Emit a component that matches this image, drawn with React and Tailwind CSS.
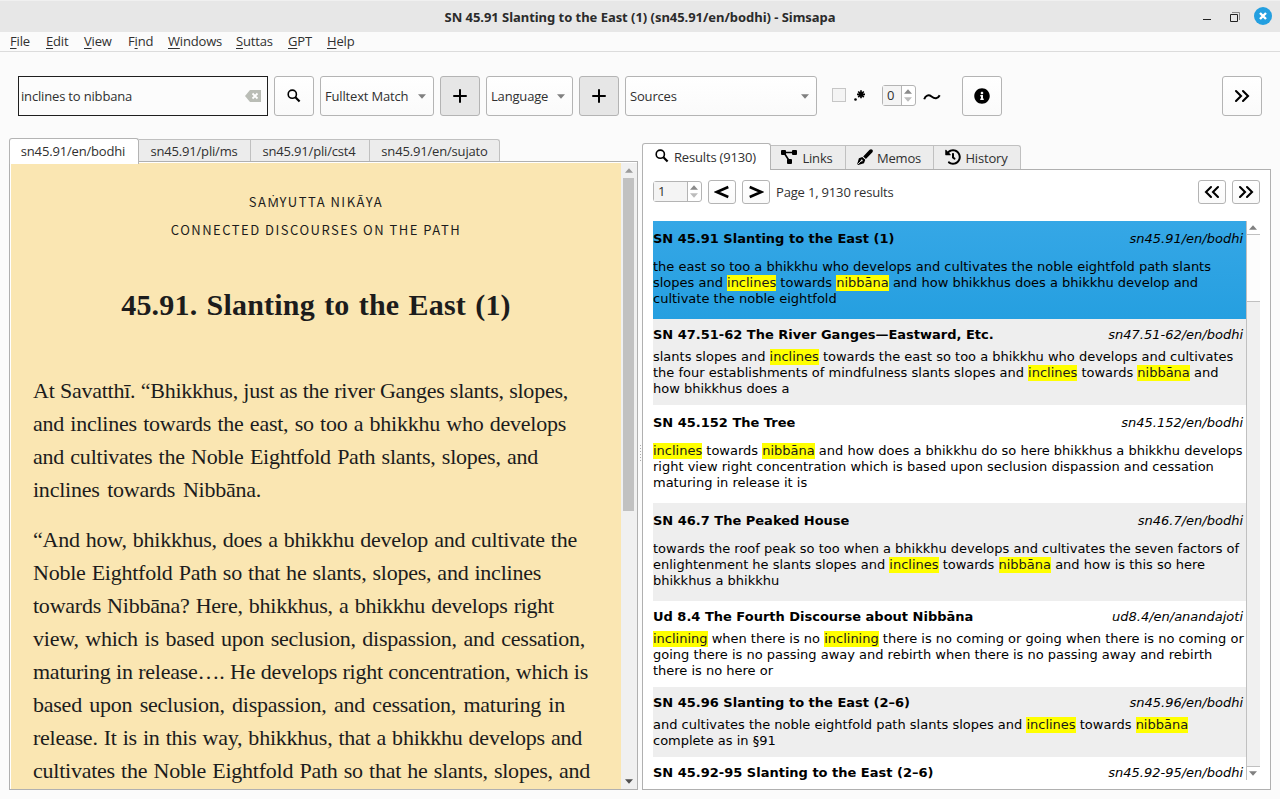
import React from "react";
import { FaHistory, FaInfoCircle } from "react-icons/fa";

const results = [
  { title: "SN 45.91 Slanting to the East (1)", uid: "sn45.91/en/bodhi", roomy: true, height: "h-[98px]", selected: true,
    lines: ["the east so too a bhikkhu who develops and cultivates the noble eightfold path slants", "slopes and [inclines] towards [nibbāna] and how bhikkhus does a bhikkhu develop and", "cultivate the noble eightfold"] },
  { title: "SN 47.51-62 The River Ganges—Eastward, Etc.", uid: "sn47.51-62/en/bodhi", height: "h-[86px]", shaded: true,
    lines: ["slants slopes and [inclines] towards the east so too a bhikkhu who develops and cultivates", "the four establishments of mindfulness slants slopes and [inclines] towards [nibbāna] and", "how bhikkhus does a"] },
  { title: "SN 45.152 The Tree", uid: "sn45.152/en/bodhi", roomy: true, height: "h-[98px]",
    lines: ["[inclines] towards [nibbāna] and how does a bhikkhu do so here bhikkhus a bhikkhu develops", "right view right concentration which is based upon seclusion dispassion and cessation", "maturing in release it is"] },
  { title: "SN 46.7 The Peaked House", uid: "sn46.7/en/bodhi", roomy: true, height: "h-[98px]", shaded: true,
    lines: ["towards the roof peak so too when a bhikkhu develops and cultivates the seven factors of", "enlightenment he slants slopes and [inclines] towards [nibbāna] and how is this so here", "bhikkhus a bhikkhu"] },
  { title: "Ud 8.4 The Fourth Discourse about Nibbāna", uid: "ud8.4/en/anandajoti", height: "h-[86px]",
    lines: ["[inclining] when there is no [inclining] there is no coming or going when there is no coming or", "going there is no passing away and rebirth when there is no passing away and rebirth", "there is no here or"] },
  { title: "SN 45.96 Slanting to the East (2–6)", uid: "sn45.96/en/bodhi", height: "h-[70px]", shaded: true,
    lines: ["and cultivates the noble eightfold path slants slopes and [inclines] towards [nibbāna]", "complete as in §91"] },
  { title: "SN 45.92-95 Slanting to the East (2–6)", uid: "sn45.92-95/en/bodhi", height: "h-[86px]", lines: [] },
];

const paragraphs = [
  [
    ["w-[535px]", "At Savatthī. “Bhikkhus, just as the river Ganges slants, slopes,"],
    ["w-[533px]", "and inclines towards the east, so too a bhikkhu who develops"],
    ["w-[505px]", "and cultivates the Noble Eightfold Path slants, slopes, and"],
    ["w-[228px]", "inclines towards Nibbāna."],
  ],
  [
    ["w-[544px]", "“And how, bhikkhus, does a bhikkhu develop and cultivate the"],
    ["w-[508px]", "Noble Eightfold Path so that he slants, slopes, and inclines"],
    ["w-[521px]", "towards Nibbāna? Here, bhikkhus, a bhikkhu develops right"],
    ["w-[552px]", "view, which is based upon seclusion, dispassion, and cessation,"],
    ["w-[555px]", "maturing in release…. He develops right concentration, which is"],
    ["w-[532px]", "based upon seclusion, dispassion, and cessation, maturing in"],
    ["w-[549px]", "release. It is in this way, bhikkhus, that a bhikkhu develops and"],
    ["w-[557px]", "cultivates the Noble Eightfold Path so that he slants, slopes, and"],
  ],
];

const menus = [
  ["", "F", "ile", "w-[36px]"], ["", "E", "dit", "w-[38px]"], ["", "V", "iew", "w-[44px]"], ["F", "i", "nd", "w-[40px]"],
  ["", "W", "indows", "w-[68px]"], ["", "S", "uttas", "w-[52px]"], ["", "G", "PT", "w-[39px]"], ["", "H", "elp", "w-[40px]"],
];

const button = "flex shrink-0 items-center justify-center rounded-[3px] border border-[#b4b4b4] bg-linear-to-b from-white to-[#fafafa]";

function Triangle({ up, className = "text-[#8a8a8a]" }) {
  return (
    <svg width="8" height="5" viewBox="0 0 8 5" className={className} fill="currentColor">
      <path d={up ? "M4 0.3 8 4.7H0z" : "M0 0.3H8L4 4.7z"} />
    </svg>
  );
}

function SearchIcon({ className = "" }) {
  return (
    <svg width="14" height="14" viewBox="0 0 14 14" fill="none" stroke="#000" className={className}>
      <circle cx="5.3" cy="5.2" r="4.1" strokeWidth="1.6" />
      <path d="M8.4 8.3 12.6 12.5" strokeWidth="2.2" />
    </svg>
  );
}

function PlusIcon() {
  return (
    <svg width="14" height="14" viewBox="0 0 14 14" fill="none" stroke="#000" strokeWidth="2" strokeLinecap="round">
      <path d="M7 1v12M1 7h12" />
    </svg>
  );
}

function ChevronsIcon({ left }) {
  return (
    <svg width="16" height="14" viewBox="0 0 16 14" fill="none" stroke="#000" strokeWidth="2.1" strokeLinecap="round">
      <path d={left ? "M7 2 2 7l5 5M14 2 9 7l5 5" : "M2 2l5 5-5 5M9 2l5 5-5 5"} />
    </svg>
  );
}

function AngleIcon({ left }) {
  return (
    <svg width="16" height="14" viewBox="0 0 16 14" fill="none" stroke="#000" strokeWidth="2.5">
      <path d={left ? "M14.3 2 2.8 7l11.5 5" : "M1.7 2l11.5 5-11.5 5"} />
    </svg>
  );
}

function LinksIcon() {
  return (
    <svg width="16" height="14" viewBox="0 0 16 14" fill="#000" className="mb-[2px]">
      <rect x="0" y="0" width="5" height="5" rx="1" />
      <rect x="11" y="0" width="5" height="5" rx="1" />
      <rect x="6" y="9" width="5" height="5" rx="1" />
      <path d="M4 2.5h8M3.5 3.5 8 10.5" stroke="#000" strokeWidth="1.6" />
    </svg>
  );
}

function BrushIcon() {
  return (
    <svg width="16" height="16" viewBox="0 0 16 16" className="mb-[2px]">
      <path d="M6.2 7.4 12.6.8c.8-.8 2-.8 2.7-.1.8.8.7 1.9-.1 2.8L8.9 10.1z" />
      <path d="M5.4 8 8.3 10.8 7 14.2 1.2 16 .2 15.1 1.9 9.2z" />
      <path d="M.9 15.2 4.3 11.7" stroke="#ececec" strokeWidth=".9" />
      <circle cx="4.7" cy="11.4" r="1" fill="#ececec" />
      <path d="M5.2 7.3 9.1 11" stroke="#ececec" strokeWidth=".7" />
    </svg>
  );
}

function Spinner({ value, compact }) {
  return (
    <div className={`flex h-[21px] shrink-0 rounded-[3px] border border-[#b4b4b4] bg-white ${compact ? "w-[34px]" : "w-[49px]"}`}>
      <div className="flex flex-1 items-center bg-[#f4f4f4] pl-1 leading-none">{value}</div>
      <div className="flex w-[14px] flex-col items-center justify-center gap-[3px] border-l border-[#b4b4b4] pr-px">
        <Triangle up />
        <Triangle className="text-[#bcbcbc]" />
      </div>
    </div>
  );
}

function Select({ label, className }) {
  return (
    <div className={`flex h-10 shrink-0 items-center justify-between rounded-[3px] border border-[#b4b4b4] bg-linear-to-b from-white to-[#fafafa] pl-[4px] pr-[7px] ${className}`}>
      <span>{label}</span>
      <Triangle className="text-[#808080]" />
    </div>
  );
}

function Snippet({ text }) {
  return text.split(/(\[[^\]]+\])/).map((part, i) =>
    part.startsWith("[") ? <span key={i} className="inline-block h-4 bg-[#ffff00] text-[#1a1a1a]">{part.slice(1, -1)}</span> : part
  );
}

function Result({ item }) {
  const background = item.selected ? "bg-linear-to-b from-[#35a7e6] to-[#259fe0]" : item.shaded ? "bg-[#eeeeee]" : "bg-white";
  return (
    <div className={`shrink-0 text-black ${item.height} ${background} ${item.roomy ? "pt-[10px]" : "pt-[8px]"}`}>
      <div className="flex justify-between pr-[3px]">
        <b>{item.title}</b>
        <i>{item.uid}</i>
      </div>
      <div className={item.roomy ? "mt-3" : "mt-1.5"}>
        {item.lines.map((line) => (
          <div key={line} className="h-4 whitespace-nowrap"><Snippet text={line} /></div>
        ))}
      </div>
    </div>
  );
}

function TitleBar() {
  return (
    <header className="grid h-8 shrink-0 grid-cols-[1fr_auto_1fr] items-center border-t border-[#f0f0f0] bg-[#e7e7e7]">
      <span />
      <h1 className="font-['Noto_Sans',sans-serif] text-[13px] font-bold tracking-[-0.04px] text-[#2b2b2b]">
        SN 45.91 Slanting to the East (1) (sn45.91/en/bodhi) - Simsapa
      </h1>
      <div className="flex items-center justify-end pr-2">
        <svg width="8" height="10" viewBox="0 0 8 10" className="mr-[19px]"><path d="M0 7h8v1H0z" fill="#222" /></svg>
        <svg width="10" height="10" viewBox="0 0 10 10" className="mr-[14px]" fill="none">
          <path d="M.5 2.5h7v7h-7z" stroke="#222" />
          <path d="M2 .5h7.5V8" stroke="#888" />
        </svg>
        <svg width="18" height="18" viewBox="0 0 18 18" className="-mt-px">
          <circle cx="9" cy="9" r="9" fill="#239fe0" />
          <path d="M6 6l6 6M12 6l-6 6" stroke="#fff" strokeWidth="2.4" />
        </svg>
      </div>
    </header>
  );
}

function Toolbar() {
  return (
    <div className="mt-6 flex h-10 shrink-0 items-center pl-[18px] pr-[18px]">
      <div className="flex h-10 w-[250px] shrink-0 items-center justify-between border border-[#1f1f1f] bg-[#fcfcfc] pl-[2px] pr-[6px]">
        <span>inclines to nibbana</span>
        <svg width="16" height="12" viewBox="0 0 16 12">
          <path d="M0 6 5 0h11v12H5z" fill="#babdb6" />
          <path d="M7.5 3.5l5 5M12.5 3.5l-5 5" stroke="#fff" strokeWidth="1.8" />
        </svg>
      </div>
      <div className={`${button} ml-1.5 h-10 w-10`}><SearchIcon /></div>
      <Select label="Fulltext Match" className="ml-1.5 w-[114px]" />
      <div className="ml-1.5 flex h-10 w-10 shrink-0 items-center justify-center rounded-[3px] border border-[#b4b4b4] bg-[#e6e6e6]"><PlusIcon /></div>
      <Select label="Language" className="ml-1.5 w-[87px]" />
      <div className="ml-1.5 flex h-10 w-10 shrink-0 items-center justify-center rounded-[3px] border border-[#b4b4b4] bg-[#e6e6e6]"><PlusIcon /></div>
      <Select label="Sources" className="ml-1.5 w-48" />
      <div className="mb-[2px] ml-[15px] size-[14px] shrink-0 border border-[#c6c6c6] bg-[#f4f4f4]" />
      <svg width="12" height="12" viewBox="0 0 12 12" className="ml-2 shrink-0">
        <circle cx="1.5" cy="9.500" r="1.3" />
        <path d="M7 .3v8M3 4.3h8M4.2 1.500l5.6 5.6M9.8 1.500 4.2 7.1" stroke="#000" strokeWidth="1.7" />
      </svg>
      <div className="mb-px ml-4"><Spinner value="0" compact /></div>
      <svg width="18" height="8" viewBox="0 0 18 8" className="ml-[7px] mt-px shrink-0" fill="none" stroke="#000" strokeWidth="2">
        <path d="M1.2 6.3C2.5 2.4 5.5 1.200 8.5 3.500c3.200 2.400 6.300 2.600 8.200-1.200" />
      </svg>
      <div className={`${button} ml-[21px] h-10 w-10`}><FaInfoCircle size={16} color="#000" /></div>
      <div className={`${button} ml-auto h-10 w-10`}><ChevronsIcon /></div>
    </div>
  );
}

const idleTab = "flex shrink-0 items-center justify-center border-r border-t border-[#c0c0c0] bg-[#ececec]";

function ReaderPane() {
  return (
    <section className="mt-[21px] flex w-[629px] shrink-0 flex-col">
      <div className="flex h-6 shrink-0 items-end">
        <div className="z-10 flex h-[26px] w-[130px] shrink-0 translate-y-[1px] items-center justify-center self-start rounded-t-[3px] border border-b-0 border-[#b4b4b4] bg-white pb-[2px] pr-[2px]">sn45.91/en/bodhi</div>
        <div className={`${idleTab} h-[22px] w-[112px] pr-[1px]`}>sn45.91/pli/ms</div>
        <div className={`${idleTab} h-[22px] w-[119px] pr-[2px]`}>sn45.91/pli/cst4</div>
        <div className={`${idleTab} h-[22px] w-[130px] rounded-tr-[3px]`}>sn45.91/en/sujato</div>
      </div>
      <div className="flex min-h-0 flex-1 border border-[#b0b0b0] bg-white pl-px pt-px">
        <article className="h-full w-[610px] shrink-0 overflow-hidden bg-[#fae6b2] pl-[22px] text-[#1c1c1c]">
          <div className="-ml-[22px] pt-[25px] text-center font-['Noto_Sans_CJK_SC','Noto_Sans',sans-serif] text-[13px] leading-7 tracking-[1.5px]">
            <p className="h-7">SA<span className="font-['Noto_Sans',sans-serif] text-[12.5px] tracking-[0.8px]">Ṁ</span>YUTTA NIKĀYA</p>
            <p>CONNECTED DISCOURSES ON THE PATH</p>
          </div>
          <h2 className="-ml-[22px] mt-[41px] text-center font-['Liberation_Serif',serif] text-[30px] font-bold leading-[40px] tracking-[0.2px] [word-spacing:1.500px]">45.91. Slanting to the East (1)</h2>
          <div className="mt-[49px] flex flex-col gap-[17px] font-['Liberation_Serif',serif] text-[22px] leading-[33px] tracking-[-0.24px]">
            {paragraphs.map((lines, i) => (
              <p key={i}>
                {lines.map(([width, text]) => (
                  <span key={text} className={`block h-[33px] [text-align-last:justify] ${width}`}>{text}</span>
                ))}
              </p>
            ))}
          </div>
        </article>
        <div className="flex flex-1 flex-col items-center bg-[#f0f0f0] pr-px pt-[5px]">
          <Triangle up className="text-[#9a9a9a]" />
          <div className="mt-[5px] h-[333px] w-[11px] bg-[#c1c1c1]" />
          <Triangle className="mb-[5px] mt-auto text-[#505050]" />
        </div>
      </div>
    </section>
  );
}

function ResultsPane() {
  return (
    <section className="mt-[27px] flex w-[629px] shrink-0 flex-col">
      <div className="flex h-[26px] shrink-0 items-end">
        <div className="z-10 flex h-[27px] w-[129px] shrink-0 translate-y-[1px] items-center justify-center rounded-t-[3px] border border-b-0 border-[#b4b4b4] bg-white pr-[2px]">
          <SearchIcon className="mb-[3px] mr-[5px]" />Results (9130)
        </div>
        <div className={`${idleTab} h-6 w-[75px] gap-[5px] pr-[2px]`}><LinksIcon />Links</div>
        <div className={`${idleTab} h-6 w-[88px] gap-[4px] pr-[1px]`}><BrushIcon />Memos</div>
        <div className={`${idleTab} h-6 w-[87px] gap-[4px] rounded-tr-[3px] pr-[1px]`}><FaHistory size={16} color="#000" className="mb-[2px]" />History</div>
      </div>
      <div className="flex min-h-0 flex-1 flex-col border border-[#b0b0b0] bg-white pb-[9px] pl-[10px] pr-[10px] pt-[10px]">
        <div className="flex h-6 shrink-0 items-center">
          <div className="mb-px"><Spinner value="1" /></div>
          <div className={`${button} ml-1.5 h-6 w-7`}><AngleIcon left /></div>
          <div className={`${button} ml-1.5 h-6 w-7`}><AngleIcon /></div>
          <span className="ml-1.5">Page 1, 9130 results</span>
          <div className={`${button} ml-auto h-6 w-7`}><ChevronsIcon left /></div>
          <div className={`${button} ml-1.5 h-6 w-7`}><ChevronsIcon /></div>
        </div>
        <div className="mt-[17px] flex min-h-0 flex-1">
          <div className="flex w-[593px] shrink-0 flex-col overflow-hidden font-['DejaVu_Sans',sans-serif] text-[13px] leading-4 tracking-[-0.005px]">
            {results.map((item) => <Result key={item.title} item={item} />)}
          </div>
          <div className="flex w-[14px] shrink-0 flex-col border-l border-[#c0c0c0] bg-[#f0f0f0]">
            <div className="flex h-[13px] items-center justify-center bg-white pr-px"><Triangle up className="text-[#808080]" /></div>
            <div className="h-[68px] border-y border-[#c0c0c0] bg-[#fdfdfd]" />
            <div className="mt-auto flex h-[14px] items-center justify-center border-t border-[#c0c0c0] bg-white pr-px"><Triangle className="text-[#808080]" /></div>
          </div>
        </div>
      </div>
    </section>
  );
}

export default function App() {
  return (
    <div className="flex h-[799px] w-[1280px] flex-col overflow-hidden bg-[#fbfbfb] font-['Open_Sans','Noto_Sans',sans-serif] text-[13px] leading-5 tracking-[-0.17px] text-[#303030]">
      <TitleBar />
      <nav className="flex h-5 shrink-0 items-center border-b border-[#dcdcdc] pb-[2px] pl-[10px]">
        {menus.map(([before, key, after, width]) => (
          <span key={key} className={`shrink-0 whitespace-nowrap ${width}`}>{before}<u className="underline-offset-2">{key}</u>{after}</span>
        ))}
      </nav>
      <Toolbar />
      <main className="flex min-h-0 flex-1 pb-[9px] pl-[9px]">
        <ReaderPane />
        <div className="flex w-1 shrink-0 flex-col items-center justify-center gap-[2px]">
          {[0, 1, 2, 3, 4, 5].map((dot) => <i key={dot} className="size-px bg-[#aaaaaa]" />)}
        </div>
        <ResultsPane />
      </main>
    </div>
  );
}
